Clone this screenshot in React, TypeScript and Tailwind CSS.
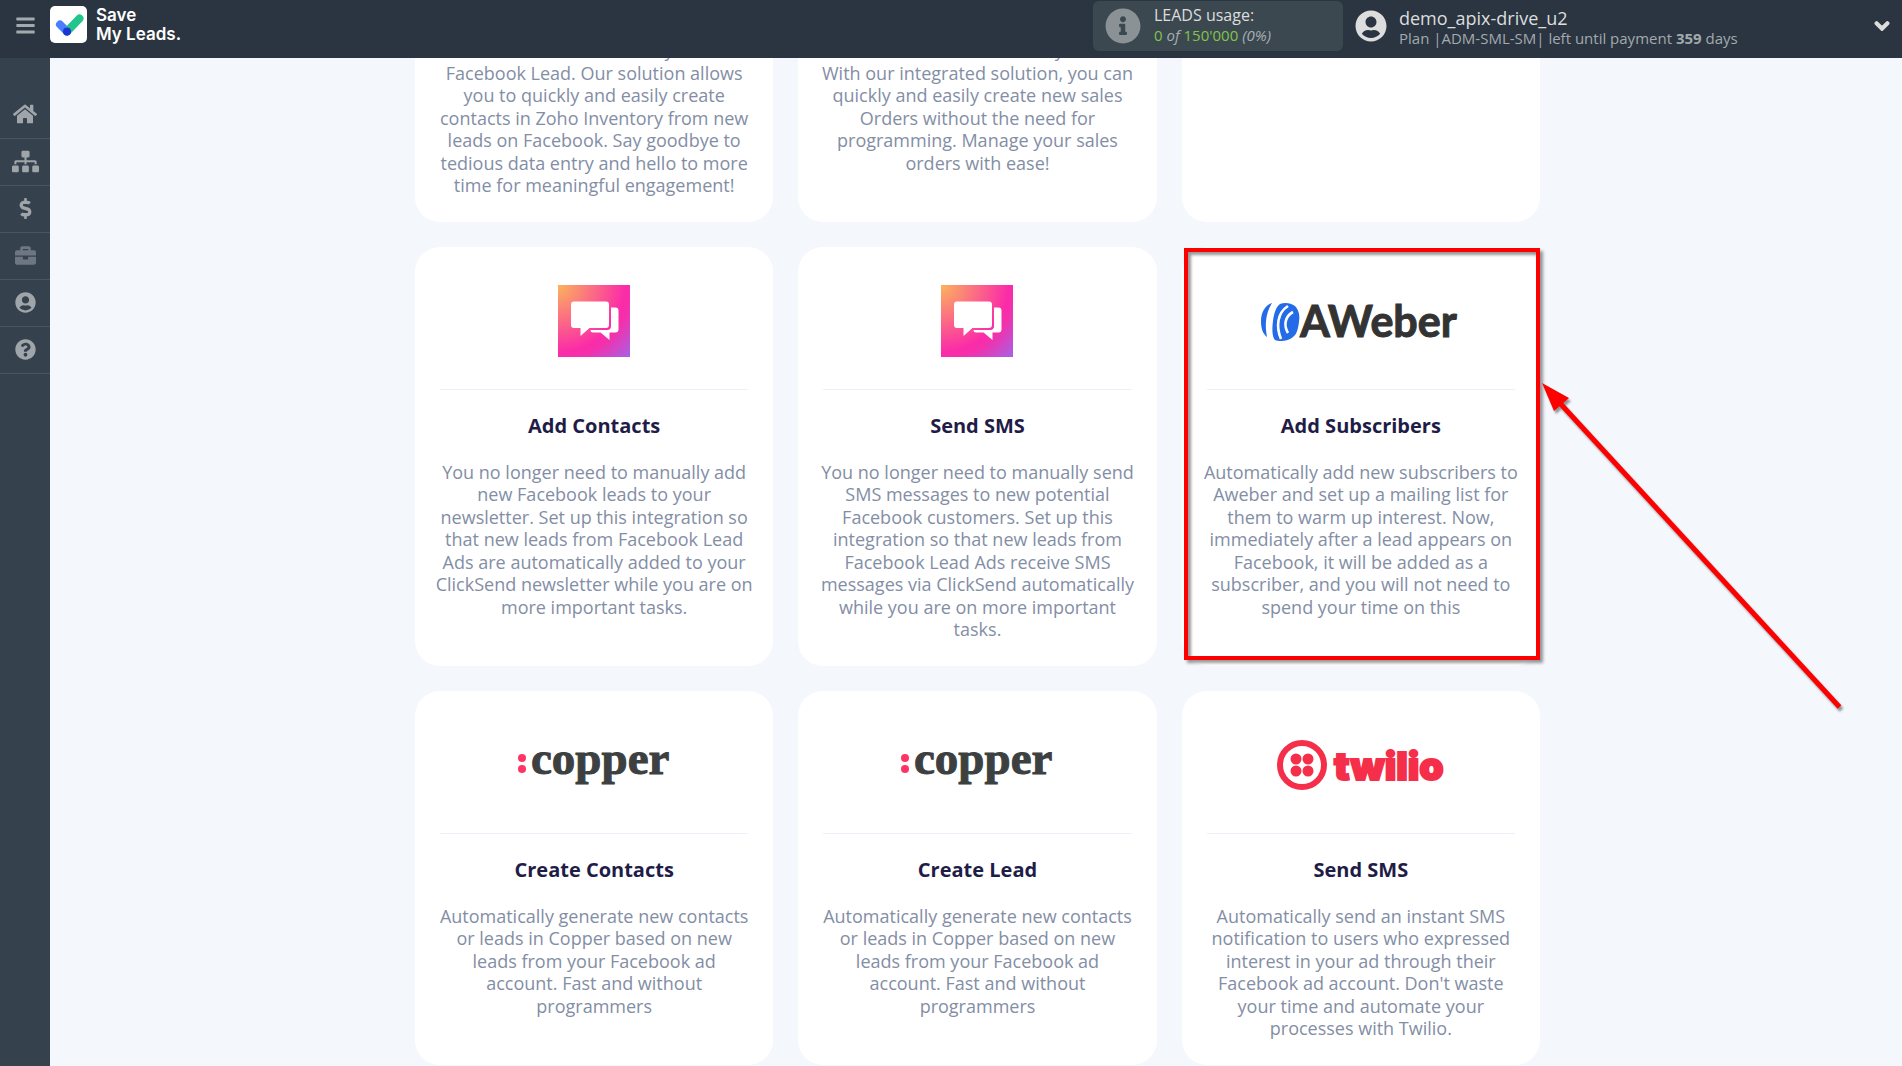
import React from "react";
import {
  FaBars,
  FaHome,
  FaSitemap,
  FaDollarSign,
  FaBriefcase,
  FaUserCircle,
  FaQuestionCircle,
  FaInfoCircle,
  FaChevronDown,
} from "react-icons/fa";

function BrandMark() {
  return (
    <svg viewBox="0 0 37 37" className="size-[37px]" aria-hidden="true">
      <rect width="37" height="37" rx="5" fill="#fff" />
      <path d="M10 18.5 17 25.5" stroke="#4a7dff" strokeWidth="8" strokeLinecap="round" />
      <path d="M17 25.5 29.5 12.5" stroke="#22c58b" strokeWidth="8" strokeLinecap="round" />
      <circle cx="17" cy="25.5" r="4" fill="#1c33d6" />
    </svg>
  );
}

function ClickSendLogo() {
  return (
    <svg viewBox="0 0 72 72" className="size-[72px]" role="img" aria-label="ClickSend">
      <defs>
        <radialGradient id="cs" gradientUnits="userSpaceOnUse" cx="0" cy="0" r="102">
          <stop offset="0" stopColor="#fbb45c" />
          <stop offset="0.66" stopColor="#fb2ba8" />
          <stop offset="0.72" stopColor="#f52faa" />
          <stop offset="1" stopColor="#a463e8" />
        </radialGradient>
      </defs>
      <rect width="72" height="72" fill="url(#cs)" />
      <path d="M54 22.5h3.5a3 3 0 0 1 3 3v19a3 3 0 0 1-3 3H51.5V55L42.5 47.5H35a2.5 2.5 0 0 1-2.5-2.5H49a4 4 0 0 0 4-4V22.5Z" fill="#fff" />
      <path d="M16 16.5h32a3 3 0 0 1 3 3V40a3 3 0 0 1-3 3H31.5L22.5 51v-8H16a3 3 0 0 1-3-3V19.5a3 3 0 0 1 3-3Z" fill="#fff" />
    </svg>
  );
}

function AWeberLogo() {
  return (
    <svg viewBox="0 0 200 44" className="h-11 w-[200px]" role="img" aria-label="AWeber">
      <path d="M11 4C4 6 0 14 0 22c0 8 2 13 6 16C4 27 4 15 11 4Z" fill="#246be8" />
      <path d="M19 5c5-2 12-1 16 3 3 4 4 9 3 15-1 7-2 12-6 15-4 4-13 5-18 3-3-3-3-12-2-19 1-8 3-14 7-17Z" fill="#246be8" />
      <path d="M27 7C16 14 15 28 20 40M32 13c-9 5-9 14-5 21" fill="none" stroke="#fff" strokeWidth="2.6" />
      <text x="39" y="38" fontFamily="Lato, sans-serif" fontWeight="700" fontSize="43" fill="#333" stroke="#333" strokeWidth="1">AWeber</text>
    </svg>
  );
}

function CopperLogo() {
  return (
    <svg viewBox="0 0 154 44" className="h-11 w-[154px]" role="img" aria-label="Copper">
      <circle cx="5" cy="15" r="4" fill="#ff3465" />
      <circle cx="5" cy="26" r="4" fill="#ff3465" />
      <text x="14" y="31" fontFamily="'Liberation Serif', serif" fontWeight="700" fontSize="47" fill="#3c4040" stroke="#3c4040" strokeWidth="1">copper</text>
    </svg>
  );
}

function TwilioLogo() {
  return (
    <svg viewBox="0 0 168 50" className="h-[50px] w-[168px]" role="img" aria-label="Twilio">
      <circle cx="25" cy="25" r="22" fill="none" stroke="#f52f4a" strokeWidth="6" />
      <circle cx="19" cy="19" r="5.5" fill="#f52f4a" />
      <circle cx="31" cy="19" r="5.5" fill="#f52f4a" />
      <circle cx="19" cy="31" r="5.5" fill="#f52f4a" />
      <circle cx="31" cy="31" r="5.5" fill="#f52f4a" />
      <text x="57" y="40" fontFamily="Inter, sans-serif" fontWeight="900" fontSize="39" fill="#f52f4a" stroke="#f52f4a" strokeWidth="2">twilio</text>
    </svg>
  );
}

type CardData = { id: string; logo?: React.ReactNode; title?: string; text?: string; highlight?: boolean };

const cards: CardData[] = [
  {
    id: "zoho-contacts",
    text: "new contact automatically from a Facebook Lead. Our solution allows you to quickly and easily create contacts in Zoho Inventory from new leads on Facebook. Say goodbye to tedious data entry and hello to more time for meaningful engagement!",
  },
  {
    id: "zoho-orders",
    text: "of new orders automatically online. With our integrated solution, you can quickly and easily create new sales Orders without the need for programming. Manage your sales orders with ease!",
  },
  { id: "zoho-leads" },
  {
    id: "clicksend-contacts",
    logo: <ClickSendLogo />,
    title: "Add Contacts",
    text: "You no longer need to manually add new Facebook leads to your newsletter. Set up this integration so that new leads from Facebook Lead Ads are automatically added to your ClickSend newsletter while you are on more important tasks.",
  },
  {
    id: "clicksend-sms",
    logo: <ClickSendLogo />,
    title: "Send SMS",
    text: "You no longer need to manually send SMS messages to new potential Facebook customers. Set up this integration so that new leads from Facebook Lead Ads receive SMS messages via ClickSend automatically while you are on more important tasks.",
  },
  {
    id: "aweber",
    logo: <AWeberLogo />,
    title: "Add Subscribers",
    text: "Automatically add new subscribers to Aweber and set up a mailing list for them to warm up interest. Now, immediately after a lead appears on Facebook, it will be added as a subscriber, and you will not need to spend your time on this",
    highlight: true,
  },
  {
    id: "copper-contacts",
    logo: <CopperLogo />,
    title: "Create Contacts",
    text: "Automatically generate new contacts or leads in Copper based on new leads from your Facebook ad account. Fast and without programmers",
  },
  {
    id: "copper-lead",
    logo: <CopperLogo />,
    title: "Create Lead",
    text: "Automatically generate new contacts or leads in Copper based on new leads from your Facebook ad account. Fast and without programmers",
  },
  {
    id: "twilio",
    logo: <TwilioLogo />,
    title: "Send SMS",
    text: "Automatically send an instant SMS notification to users who expressed interest in your ad through their Facebook ad account. Don't waste your time and automate your processes with Twilio.",
  },
];

/* Red frame and arrow drawn over the highlighted card. */
function Highlight() {
  return (
    <>
      <div className="pointer-events-none absolute top-[1px] right-0 bottom-[6px] left-[2px] border-4 border-[#fe0000] shadow-[3px_3px_3px_rgba(0,0,0,0.4),inset_3px_3px_3px_rgba(0,0,0,0.4)]" />
      <svg viewBox="0 0 304 332" className="pointer-events-none absolute top-[136px] left-full z-10 h-[332px] w-[304px] drop-shadow-[2px_3px_1px_rgba(0,0,0,0.4)]" aria-hidden="true">
        <path d="M2 0 29 15 14 28Z" fill="#fe0000" />
        <path d="M18 18 299.5 324" stroke="#fe0000" strokeWidth="5" />
      </svg>
    </>
  );
}

function Card({ card }: { card: CardData }) {
  return (
    <article className="relative flex flex-col rounded-[25px] bg-white p-[25px] text-center">
      {card.title && (
        <>
          <div className="mb-[19px] flex h-[98px] items-center justify-center">{card.logo}</div>
          <hr className="border-[#eeeffa]" />
          <h3 className="my-6 text-xl leading-[23px] font-bold text-[#1f1d48]">{card.title}</h3>
        </>
      )}
      <p className="-mx-[5px] text-lg leading-tight text-[#838ea5]">{card.text}</p>
      {card.highlight && <Highlight />}
    </article>
  );
}

const navItems = [
  { label: "Home", icon: <FaHome className="size-6" /> },
  { label: "Connections", icon: <FaSitemap className="size-[27px]" /> },
  { label: "Billing", icon: <FaDollarSign className="size-[21px]" /> },
  { label: "Business", icon: <FaBriefcase className="size-[21px]" />, dim: true },
  { label: "Profile", icon: <FaUserCircle className="size-[21px]" /> },
  { label: "Help", icon: <FaQuestionCircle className="size-[21px]" /> },
];

export default function App() {
  return (
    <div className="flex h-screen flex-col overflow-hidden bg-[#f4f8fd] font-['Open_Sans',sans-serif]">
      <header className="z-20 flex h-[58px] shrink-0 bg-[#2a3541]">
        <button type="button" aria-label="Menu" className="flex h-[50px] w-[50px] items-center justify-center text-[#a3a9ae]">
          <FaBars className="size-[21px]" />
        </button>
        <a href="#" className="flex h-[49px] items-center gap-[9px] text-white">
          <BrandMark />
          <span className="font-[Inter,sans-serif] text-[17px] leading-[19px] font-semibold">
            Save
            <br />
            My Leads.
          </span>
        </a>
        <div className="mt-px ml-auto flex h-[50px] w-[250px] items-center gap-[13px] rounded-md bg-[#3b4850] pl-3">
          <FaInfoCircle className="size-9 text-[#8b9295]" />
          <div className="pb-0.5">
            <div className="text-base leading-5 text-[#dddddd]">LEADS usage:</div>
            <div className="text-[15px] leading-5 text-[#a9afb3]">
              <span className="text-[#83c34b]">0</span> <i>of</i> <span className="text-[#83c34b]">150'000</span> <i>(0%)</i>
            </div>
          </div>
        </div>
        <button type="button" className="ml-3 flex h-[52px] w-[547px] items-center gap-3 pr-3 text-left">
          <FaUserCircle className="size-8 text-[#dddddd]" />
          <span className="flex-1 pt-1">
            <span className="block text-lg leading-5 text-[#dddddd]">demo_apix-drive_u2</span>
            <span className="block text-[15px] leading-5 text-[#a3a9ae]">
              Plan |ADM-SML-SM| left until payment <b>359</b> days
            </span>
          </span>
          <FaChevronDown className="size-4 stroke-[#dddddd] stroke-[50px] text-[#dddddd]" />
        </button>
      </header>
      <div className="flex min-h-0 flex-1">
        <nav className="w-[50px] shrink-0 bg-[#36414e] pt-[34px]">
          {navItems.map((item) => (
            <a
              key={item.label}
              href="#"
              aria-label={item.label}
              className={`flex h-[47px] items-center justify-center border-b border-[#4a5562] pb-0.5 ${item.dim ? "text-[#6e7681]" : "text-[#a0a5aa]"}`}
            >
              {item.icon}
            </a>
          ))}
        </nav>
        <main className="min-w-0 flex-1 overflow-hidden pl-[3px]">
          <div className="mx-auto -mt-11 grid w-full max-w-[1125px] grid-cols-3 gap-[25px]">
            {cards.map((card) => (
              <Card key={card.id} card={card} />
            ))}
          </div>
        </main>
      </div>
    </div>
  );
}
